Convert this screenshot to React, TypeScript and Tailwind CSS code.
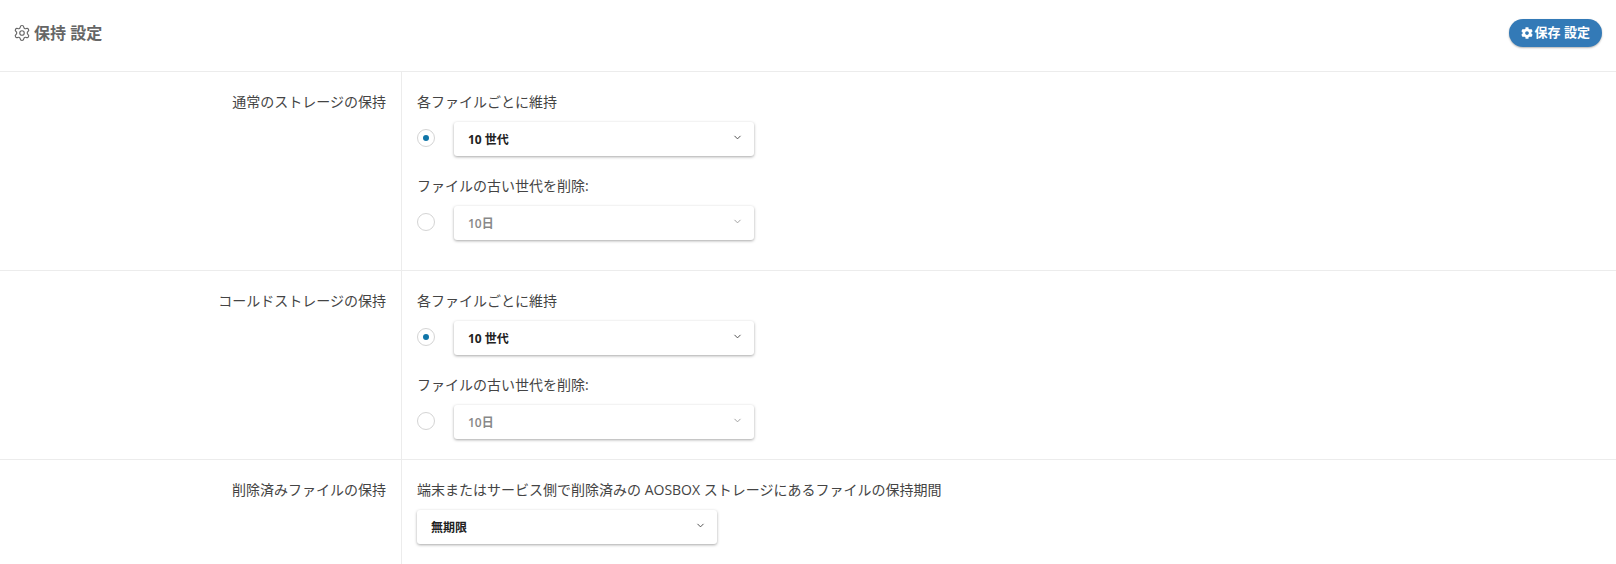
import { ChevronDown, Settings } from 'lucide-react';
import { FaCog } from 'react-icons/fa';

const font = "font-['Open_Sans','Noto_Sans_CJK_JP',sans-serif]";

function Select({ label, disabled, width = 'w-[300px]' }: { label: string; disabled?: boolean; width?: string }) {
  return (
    <div
      className={`flex h-[34px] items-center justify-between rounded-[3px] bg-white pl-[14px] pr-[11px] shadow-[0_1px_3px_rgba(0,0,0,0.35)] ${width}`}
    >
      <span className={`pt-[1px] text-[12px] ${disabled ? 'font-semibold text-[#888]' : 'font-bold text-[#222]'}`}>{label}</span>
      <ChevronDown className={`mb-[3px] h-[11px] w-[11px] ${disabled ? 'text-[#999]' : 'text-[#444]'}`} strokeWidth={2} />
    </div>
  );
}

function Radio({ checked }: { checked?: boolean }) {
  return (
    <span className="flex h-[18px] w-[18px] shrink-0 items-center justify-center rounded-full border border-[#d4d4d4] bg-white">
      {checked && <span className="h-[6px] w-[6px] rounded-full bg-[#0f75a8]" />}
    </span>
  );
}

function RetentionRow({ title, last }: { title: string; last?: boolean }) {
  return (
    <Row title={title} className={last ? 'h-[189px]' : 'h-[199px]'}>
      <p className="text-[14px] leading-[20px] text-[#444]">各ファイルごとに維持</p>
      <div className="mt-[10px] flex gap-[19px]">
        <div className="pt-[7px]">
          <Radio checked />
        </div>
        <Select label="10 世代" />
      </div>
      <p className="mt-[20px] text-[14px] leading-[20px] text-[#444]">ファイルの古い世代を削除:</p>
      <div className="mt-[10px] flex gap-[19px]">
        <div className="pt-[7px]">
          <Radio />
        </div>
        <Select label="10日" disabled />
      </div>
    </Row>
  );
}

function Row({ title, className, children }: { title: string; className?: string; children: React.ReactNode }) {
  return (
    <div className={`flex border-b border-[#ececec] ${className ?? ''}`}>
      <div className="w-[402px] shrink-0 border-r border-[#ececec] pr-[15px] pt-[20px] text-right text-[14px] leading-[20px] text-[#444]">
        {title}
      </div>
      <div className="pl-[15px] pt-[20px]">{children}</div>
    </div>
  );
}

export default function App() {
  return (
    <div className={`h-[564px] w-full overflow-hidden bg-white ${font}`}>
      <div className="flex h-[72px] items-center justify-between border-b border-[#ececec] pb-[5px] pl-[13px] pr-[14px]">
        <div className="flex items-center gap-[3px] text-[#666]">
          <Settings className="h-[18px] w-[18px]" strokeWidth={1.5} />
          <h1 className="text-[16px] font-bold">保持 設定</h1>
        </div>
        <button className="flex h-[28px] items-center gap-[2px] rounded-full bg-[#337ab7] px-[12px] text-[13px] font-bold text-white shadow-[0_1px_2px_rgba(0,0,0,0.3)]">
          <FaCog className="h-[12px] w-[12px]" />
          保存 設定
        </button>
      </div>
      <RetentionRow title="通常のストレージの保持" />
      <RetentionRow title="コールドストレージの保持" last />
      <Row title="削除済みファイルの保持" className="h-[120px] border-b-0">
        <p className="text-[14px] leading-[20px] text-[#444]">
          端末またはサービス側で削除済みの AOSBOX ストレージにあるファイルの保持期間
        </p>
        <div className="mt-[10px]">
          <Select label="無期限" />
        </div>
      </Row>
    </div>
  );
}
